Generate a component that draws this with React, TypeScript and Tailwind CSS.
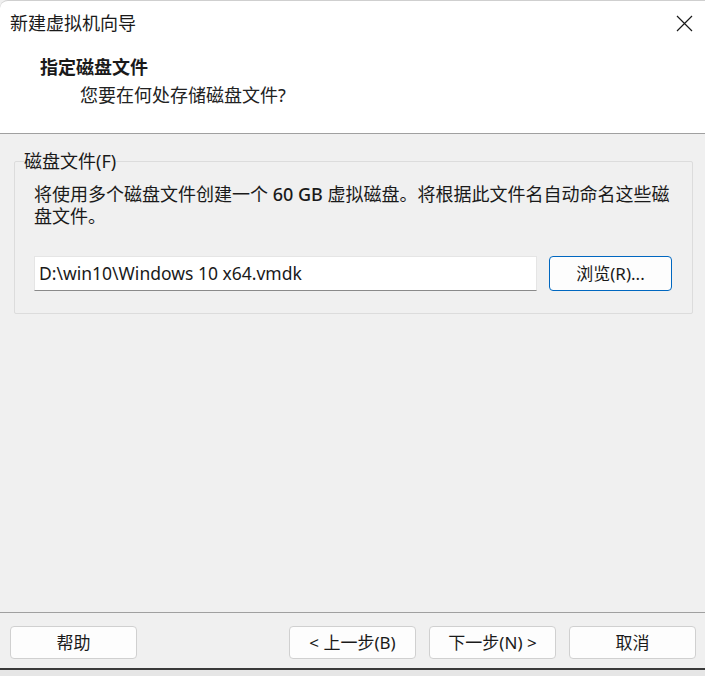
import React from "react";

const font = {
  fontFamily: '"Noto Sans", "Noto Sans CJK SC", sans-serif',
};

function Btn({ children, primary }: { children: React.ReactNode; primary?: boolean }) {
  return (
    <button
      className={
        primary
          ? "w-[123px] h-[35px] rounded-[4px] border border-[#0067c0] bg-[#fdfdfd] text-[17px] text-[#1a1a1a] flex items-center justify-center"
          : "w-[127px] h-[33px] rounded-[4px] border border-[#d0d0d0] bg-[#fdfdfd] text-[17px] text-[#1a1a1a] flex items-center justify-center"
      }
    >
      {children}
    </button>
  );
}

export default function App() {
  return (
    <div
      className="w-[705px] h-[676px] bg-[#f0f0f0] flex flex-col overflow-hidden text-[#1a1a1a]"
      style={font}
    >
      <div className="bg-white h-[134px] border-b border-[#a0a0a0] border-t border-t-[#cfcfcf] rounded-tl-[8px] flex flex-col">
        <div className="h-[43px] flex items-center justify-between pl-[10px] pr-[12px]">
          <span className="text-[18px] leading-[22px]">新建虚拟机向导</span>
          <svg width="17" height="17" viewBox="0 0 17 17" className="mt-[1px]">
            <path d="M1 1 L16 16 M16 1 L1 16" stroke="#1a1a1a" strokeWidth="1.2" fill="none" />
          </svg>
        </div>
        <div className="pl-[40px] pt-[12px]">
          <div className="text-[18px] leading-[22px] font-bold">指定磁盘文件</div>
          <div className="pl-[40px] mt-[6px] text-[18px] leading-[22px] text-[#222]">
            您要在何处存储磁盘文件?
          </div>
        </div>
      </div>

      <div className="flex-1 px-[14px] pt-[16px]">
        <fieldset className="border border-[#dcdcdc] h-[164px] m-0 p-0 rounded-[2px]">
          <legend className="ml-[9px] px-0 text-[18px] leading-[22px] text-[#1a1a1a]">
            磁盘文件(F)
          </legend>
          <div className="pl-[19px] pr-[20px] mt-[11px]">
            <p className="text-[18px] leading-[22px] whitespace-nowrap">
              将使用多个磁盘文件创建一个 <span className="font-medium">60 GB</span> 虚拟磁盘。将根据此文件名自动命名这些磁
              <br />
              盘文件。
            </p>
            <div className="flex items-center gap-[12px] mt-[29px]">
              <div className="w-[503px] h-[35px] bg-white border border-[#e5e5e5] border-b-[#8a8a8a] flex items-center pl-[4px] text-[17.5px]">
                D:\win10\Windows 10 x64.vmdk
              </div>
              <Btn primary>浏览(R)...</Btn>
            </div>
          </div>
        </fieldset>
      </div>

      <div className="border-t border-[#a0a0a0] h-[56px] pt-[13px] pl-[10px] pr-[9px] flex items-start">
        <Btn>帮助</Btn>
        <div className="flex-1" />
        <div className="flex gap-[13px]">
          <Btn>&lt; 上一步(B)</Btn>
          <Btn>下一步(N) &gt;</Btn>
          <Btn>取消</Btn>
        </div>
      </div>
      <div className="h-[8px] bg-[#e6e6e6] border-t-2 border-[#3a3a3a]" />
    </div>
  );
}
